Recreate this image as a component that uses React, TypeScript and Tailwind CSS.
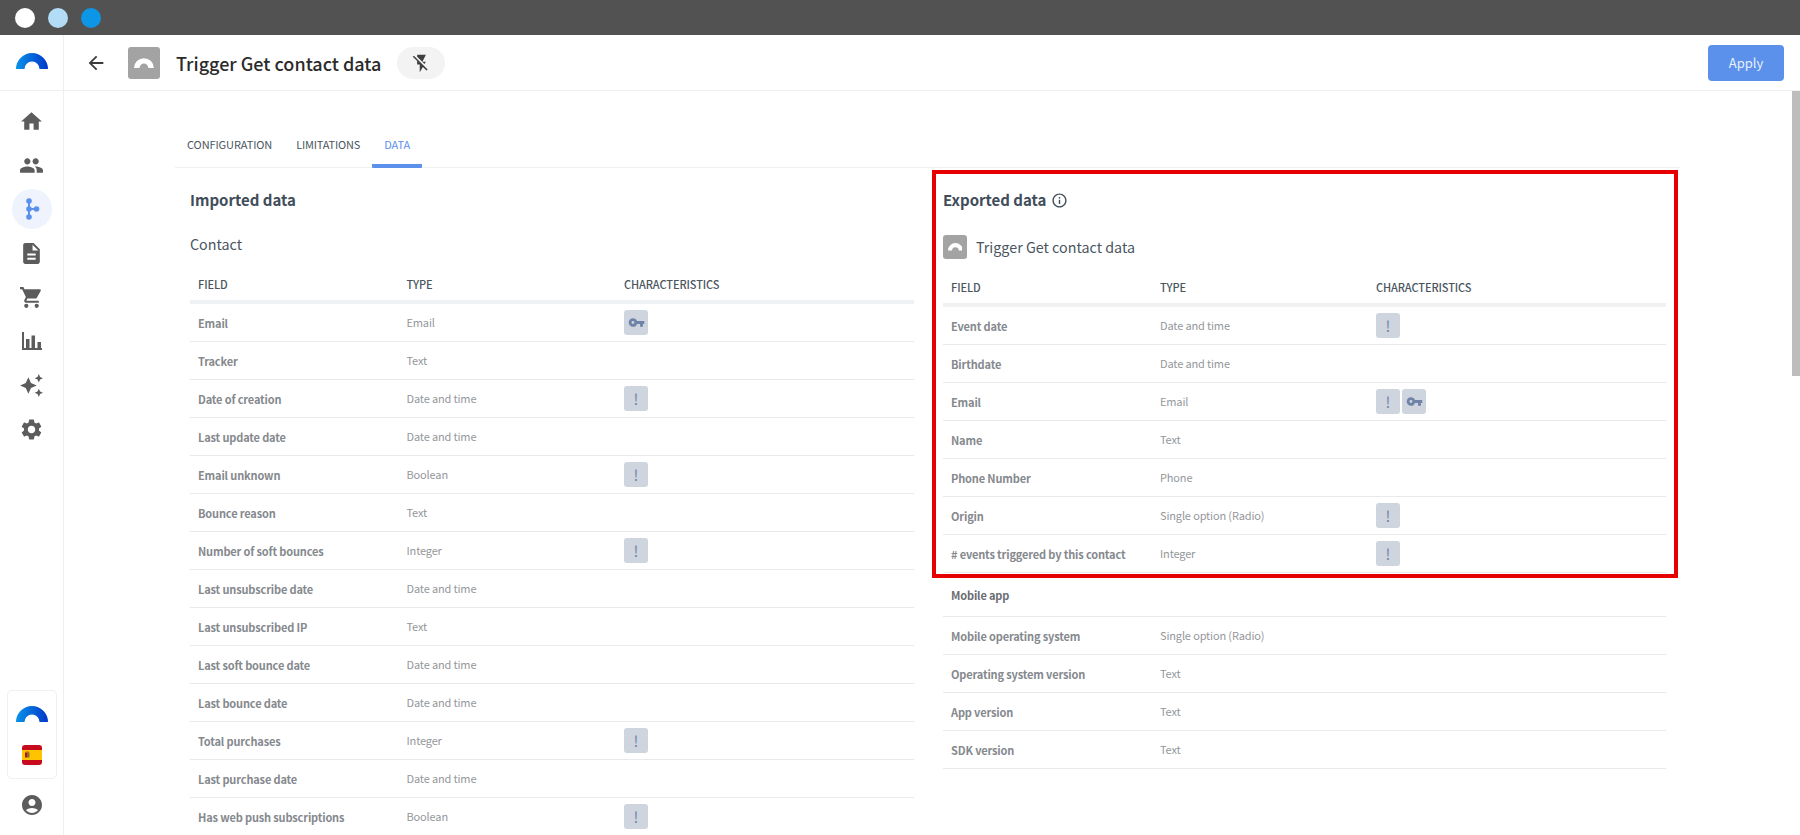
import { MdHome, MdPeople, MdDescription, MdShoppingCart, MdAutoAwesome, MdSettings, MdAccountCircle, MdVpnKey, MdArrowBack, MdFlashOff, MdInfoOutline } from 'react-icons/md';

type Row = { field: string; type?: string; flags?: ('warn' | 'key')[]; section?: boolean };

const imported: Row[] = [
  { field: 'Email', type: 'Email', flags: ['key'] },
  { field: 'Tracker', type: 'Text' },
  { field: 'Date of creation', type: 'Date and time', flags: ['warn'] },
  { field: 'Last update date', type: 'Date and time' },
  { field: 'Email unknown', type: 'Boolean', flags: ['warn'] },
  { field: 'Bounce reason', type: 'Text' },
  { field: 'Number of soft bounces', type: 'Integer', flags: ['warn'] },
  { field: 'Last unsubscribe date', type: 'Date and time' },
  { field: 'Last unsubscribed IP', type: 'Text' },
  { field: 'Last soft bounce date', type: 'Date and time' },
  { field: 'Last bounce date', type: 'Date and time' },
  { field: 'Total purchases', type: 'Integer', flags: ['warn'] },
  { field: 'Last purchase date', type: 'Date and time' },
  { field: 'Has web push subscriptions', type: 'Boolean', flags: ['warn'] },
];

const exported: Row[] = [
  { field: 'Event date', type: 'Date and time', flags: ['warn'] },
  { field: 'Birthdate', type: 'Date and time' },
  { field: 'Email', type: 'Email', flags: ['warn', 'key'] },
  { field: 'Name', type: 'Text' },
  { field: 'Phone Number', type: 'Phone' },
  { field: 'Origin', type: 'Single option (Radio)', flags: ['warn'] },
  { field: '# events triggered by this contact', type: 'Integer', flags: ['warn'] },
  { field: 'Mobile app', section: true },
  { field: 'Mobile operating system', type: 'Single option (Radio)' },
  { field: 'Operating system version', type: 'Text' },
  { field: 'App version', type: 'Text' },
  { field: 'SDK version', type: 'Text' },
];

function Logo({ id }: { id: string }) {
  return (
    <svg width="32" height="17" viewBox="0 0 32 17">
      <defs>
        <linearGradient id={id} x1="0" x2="1" y1="0" y2="0">
          <stop offset="0" stopColor="#0a93e8" />
          <stop offset="1" stopColor="#0037c9" />
        </linearGradient>
      </defs>
      <path d="M0 17A16 16 0 0 1 32 17H23.5A7.5 7.5 0 0 0 8.5 17Z" fill={`url(#${id})`} />
    </svg>
  );
}

function TriggerIcon({ size }: { size: number }) {
  return (
    <div className="flex shrink-0 items-center justify-center rounded-[3px] bg-[#a3a3a3]" style={{ width: size, height: size }}>
      <svg width={size * 0.62} height={size * 0.32} viewBox="0 0 20 10">
        <path d="M0 10A10 10 0 0 1 20 10H14.5A4.5 4.5 0 0 0 5.5 10Z" fill="#fff" />
      </svg>
    </div>
  );
}

function BranchIcon() {
  return (
    <svg width="20" height="24" viewBox="0 0 20 24" fill="#5b91ea">
      <path d="M7 4v16M7 12h7" stroke="#5b91ea" strokeWidth="2" />
      <circle cx="7" cy="4" r="2.8" />
      <circle cx="7" cy="12" r="2.8" />
      <circle cx="7" cy="20" r="2.8" />
      <circle cx="14.5" cy="12" r="2.8" />
    </svg>
  );
}

function ChartIcon() {
  return (
    <svg width="20" height="18" viewBox="0 0 20 18" fill="#5c5c5c">
      <path d="M0 0h2v16h18v2H0z" />
      <path d="M4 7h3.5v9H4zM9.5 3.5H13V16H9.5zM15.5 10H19v6h-3.5z" />
    </svg>
  );
}

function FlagEs() {
  return (
    <svg width="20" height="20" viewBox="0 0 20 20" className="rounded-[3px]">
      <rect width="20" height="20" fill="#c60b1e" />
      <rect y="5" width="20" height="10" fill="#ffc400" />
      <rect x="3" y="7.5" width="2" height="5" fill="#ad1519" />
      <rect x="5" y="7.5" width="2.5" height="5" fill="#8a6a2a" />
      <rect x="3.5" y="6.5" width="3.5" height="1.2" fill="#b5651d" />
    </svg>
  );
}

function Badge({ kind }: { kind: 'warn' | 'key' }) {
  return (
    <div className="flex h-[25px] w-6 items-center justify-center rounded-[3px] bg-[#cfd5de] text-[#6f83a8]">
      {kind === 'key' ? <MdVpnKey size={17} /> : <span className="text-[15px] leading-none">!</span>}
    </div>
  );
}

function DataTable({ rows, cols }: { rows: Row[]; cols: string }) {
  return (
    <div>
      <div className={`grid h-8 items-center px-2 text-[11px] font-medium tracking-[-0.1px] text-[#4a5560] ${cols}`}>
        <span>FIELD</span>
        <span>TYPE</span>
        <span>CHARACTERISTICS</span>
      </div>
      <div className="h-1 bg-[#f0f1f3]" />
      {rows.map((r) => (
        <div key={r.field} className={`grid items-center border-b border-[#e8e9eb] px-2 ${cols} ${r.section ? 'h-[44px]' : 'h-[38px]'}`}>
          <span className={`mt-px text-[11px] font-bold tracking-[-0.15px] ${r.section ? 'text-[#6a6e73]' : 'text-[#85898e]'}`}>{r.field}</span>
          <span className="-mt-px text-[11px] tracking-[-0.15px] text-[#94979b]">{r.type}</span>
          <div className="flex gap-0.5">
            {r.flags?.map((f) => <Badge key={f} kind={f} />)}
          </div>
        </div>
      ))}
    </div>
  );
}

const navIcons = [MdHome, MdPeople];
const navIcons2 = [MdDescription, MdShoppingCart];
const navIcons3 = [MdAutoAwesome, MdSettings];

export default function App() {
  return (
    <div className="flex h-screen flex-col overflow-hidden bg-white font-['Noto_Sans_CJK_JP','Source_Sans_Pro',sans-serif]">
      {/* Window bar */}
      <div className="flex h-[35px] shrink-0 items-center gap-[13px] bg-[#525252] pl-[15px]">
        <div className="h-5 w-5 rounded-full bg-white" />
        <div className="h-5 w-5 rounded-full bg-[#b3dcf6]" />
        <div className="h-5 w-5 rounded-full bg-[#0d96e6]" />
      </div>

      <div className="flex min-h-0 flex-1">
        {/* Sidebar */}
        <aside className="flex w-[64px] shrink-0 flex-col items-center border-r border-[#eeeff1]">
          <div className="flex h-[56px] w-full items-center justify-center border-b border-[#eeeff1] pb-[5px]">
            <Logo id="logo-top" />
          </div>
          <nav className="mt-2 flex flex-col items-center text-[#5c5c5c]">
            {navIcons.map((Icon, i) => (
              <div key={i} className="flex h-11 w-10 items-center justify-center"><Icon size={25} /></div>
            ))}
            <div className="flex h-11 w-10 items-center justify-center">
              <div className="flex h-10 w-10 items-center justify-center rounded-full bg-[#eef3fd]"><BranchIcon /></div>
            </div>
            {navIcons2.map((Icon, i) => (
              <div key={i} className="flex h-11 w-10 items-center justify-center"><Icon size={25} /></div>
            ))}
            <div className="flex h-11 w-10 items-center justify-center"><ChartIcon /></div>
            {navIcons3.map((Icon, i) => (
              <div key={i} className="flex h-11 w-10 items-center justify-center"><Icon size={25} /></div>
            ))}
          </nav>
          <div className="mt-auto mb-[18px] flex flex-col items-center">
            <div className="flex h-[89px] w-[50px] flex-col items-center rounded-[5px] border border-[#f0f0f2] pt-[14px]">
              <Logo id="logo-bottom" />
              <div className="mt-[23px]"><FlagEs /></div>
            </div>
            <MdAccountCircle size={24} className="mt-[14px] text-[#5c5c5c]" />
          </div>
        </aside>

        <div className="flex min-w-0 flex-1 flex-col">
          {/* Header */}
          <header className="flex h-[56px] shrink-0 items-center border-b border-[#eeeff1] pt-[1px] pr-4">
            <MdArrowBack size={22} className="ml-[21px] text-[#3c3c3c]" />
            <div className="ml-[21px]"><TriggerIcon size={32} /></div>
            <h1 className="ml-4 text-[18px] font-medium text-[#2b2b2b]">Trigger Get contact data</h1>
            <div className="ml-4 flex h-8 w-12 items-center justify-center rounded-full bg-[#f3f3f3]">
              <MdFlashOff size={21} className="text-[#3f3f3f]" />
            </div>
            <button className="ml-auto h-9 w-[76px] rounded-[4px] bg-[#5c91eb] text-[13px] text-[#e8f0fd]">Apply</button>
          </header>

          {/* Content */}
          <main className="relative min-h-0 flex-1 overflow-hidden">
            <div className="absolute top-0 right-0 h-[285px] w-2 bg-[#bdbdbd]" />

            <div className="mt-[32px] ml-[111px] flex h-[45px] w-[1505px] border-b border-[#eeeff1]">
              <div className="flex h-[45px] items-center px-3 pb-0.5 text-[11px] tracking-[-0.1px] text-[#4a5560]">CONFIGURATION</div>
              <div className="flex h-[45px] items-center px-3 pb-0.5 text-[11px] tracking-[-0.18px] text-[#4a5560]">LIMITATIONS</div>
              <div className="flex h-[45px] items-center rounded-b-[1px] border-b-4 border-[#5c91eb] px-3 pt-0.5 text-[11px] tracking-[-0.1px] text-[#5c91eb]">DATA</div>
            </div>

            <div className="ml-[126px] flex gap-[29px]">
              <section className="w-[724px] pt-5">
                <h2 className="text-[15px] leading-6 font-bold text-[#414d5a]">Imported data</h2>
                <h3 className="mt-[20px] mb-[12px] text-[14.3px] leading-6 text-[#4a5560]">Contact</h3>
                <DataTable rows={imported} cols="grid-cols-[208.5px_217.5px_1fr]" />
              </section>

              <section className="w-[723px] pt-5">
                <h2 className="flex items-center gap-[5px] text-[15px] leading-6 font-bold text-[#414d5a]">
                  Exported data <MdInfoOutline size={17} className="text-[#414d5a]" />
                </h2>
                <div className="mt-[23px] mb-3 flex items-center gap-[9px]">
                  <TriggerIcon size={24} />
                  <h3 className="text-[14.3px] leading-6 text-[#4a5560]">Trigger Get contact data</h3>
                </div>
                <DataTable rows={exported} cols="grid-cols-[209px_216px_1fr]" />
              </section>
            </div>

            {/* Highlight drawn over the exported block */}
            <div className="pointer-events-none absolute top-[79px] left-[868px] h-[408px] w-[746px] border-4 border-[#e60000]" />
          </main>
        </div>
      </div>
    </div>
  );
}
